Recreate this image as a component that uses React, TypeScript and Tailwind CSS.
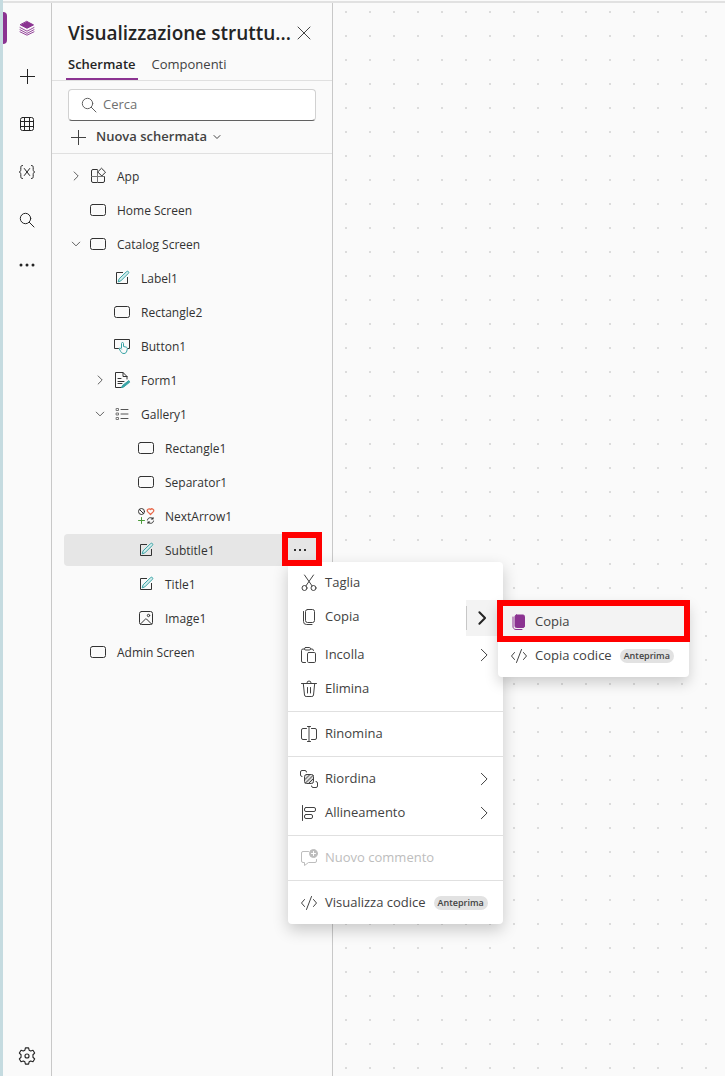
import React from 'react';
import clsx from 'clsx';

interface SvgProps {
   children: React.ReactNode;
   className?: string;
}

const Svg: React.FC<SvgProps> = ({ children, className = 'w-4 h-4' }) => (
   <svg
      className={clsx('flex-shrink-0 overflow-visible', className)}
      viewBox="0 0 16 16"
      fill="none"
      stroke="currentColor"
      strokeLinecap="round"
      strokeLinejoin="round"
      aria-hidden="true"
   >
      {children}
   </svg>
);

const ScreenIcon = () => (
   <Svg>
      <rect x="0.5" y="2.5" width="15" height="11" rx="2" />
   </Svg>
);

const AppIcon = () => (
   <Svg>
      <path d="M7.5 1.5H3A1.5 1.5 0 0 0 1.5 3v10A1.5 1.5 0 0 0 3 14.5h10a1.5 1.5 0 0 0 1.5-1.5V8.5" />
      <path d="M1.5 8.500h13M7.500 1.500v13" stroke="#777" />
      <path d="M11.800.5 15.500 4.200 11.800 8 8 4.200z" fill="#fafafa" />
   </Svg>
);

const LabelIcon = () => (
   <Svg>
      <path d="M9 2.500H2.500v11h11V7" strokeLinecap="butt" strokeLinejoin="miter" />
      <path
        d="M12.600 1.600a1.200 1.200 0 0 1 1.800 1.700l-7.600 7.600-2.600.9.800-2.600z"
        stroke="#38a3a5"
        fill="#d5eeee"
      />
   </Svg>
);

const ButtonIcon = () => (
   <Svg>
      <path d="M4.500 10.500h-4v-9h15v9h-2" />
      <path
        d="M7.500 10V5.500a1 1 0 0 1 2 0V8.500l2.500.6c1 .3 1.500.9 1.300 1.900l-.5 2c-.3 1.500-1.300 2.500-2.800 2.500-1.700 0-2.600-.7-3.300-2L5 10.500c.8-.6 1.800-.3 2.500.6"
        stroke="#38a3a5"
        fill="#fafafa"
      />
   </Svg>
);

const FormIcon = () => (
   <Svg>
      <path d="M8 15.500H1.500V.5H9l4 4V7M9 .5v4h4M4 6.500h3M4 9.500h6M4 11.500h4" />
      <path d="m14.500 8.800-6 4.700-1 2 2.200-.5 5.800-4.700z" stroke="#38a3a5" fill="#38a3a5" />
   </Svg>
);

const GalleryIcon = () => (
   <Svg>
      <path d="M2.500 2.500h2v2h-2zM2.500 7h2v2h-2zM2.500 11.500h2v2h-2z" stroke="#777" />
      <path d="M7 3.500h7M7 8h7M7 12.500h7" stroke="#555" />
   </Svg>
);

const IconsIcon = () => (
   <Svg>
      <circle cx="3.500" cy="3.500" r="3" />
      <path d="m1.500 1.500 4 4" />
      <path
        d="M12.500 6.500 9.600 3.600a1.700 1.700 0 0 1 2.900-2 1.700 1.700 0 0 1 2.900 2z"
        stroke="#e8684a"
        strokeWidth="1.200"
      />
      <path d="M3.500 9.500v6M.5 12.500h6" stroke="#4a9a3a" />
      <path d="M9.500 12c.3-1.500 1.300-2.300 3-2.300 1 0 1.800.4 2.500 1.300V9.500M15 11h-1.700M15.500 13c-.3 1.500-1.300 2.300-3 2.300-1 0-1.800-.4-2.500-1.300v1.500M10 14h1.700" />
   </Svg>
);

const ImageIcon = () => (
   <Svg>
      <rect x="1.500" y="1.500" width="13" height="13" rx="2" />
      <circle cx="10.500" cy="5.500" r="1.200" />
      <path d="m2.500 14 5-5q.5-.5 1 0l5 5" />
   </Svg>
);

const CutIcon = () => (
   <Svg>
      <circle cx="3.500" cy="13" r="2.500" />
      <circle cx="12.500" cy="13" r="2.500" />
      <path d="m3.500 0 7.600 10.900M12.500 0 4.900 10.900" />
   </Svg>
);

const CopyIcon = () => (
   <Svg>
      <rect x="4.500" y=".5" width="9" height="13" rx="2" />
      <path d="M2.500 2.500v10a3 3 0 0 0 3 3H11" />
   </Svg>
);

const CopyFilledIcon = () => (
   <Svg className="w-4 h-4 text-[#8b3391]">
      <rect x="4" y="1" width="9.500" height="12.500" rx="1.500" fill="currentColor" />
      <path d="M2 3v9a3 3 0 0 0 3 3.500H11" />
   </Svg>
);

const PasteIcon = () => (
   <Svg>
      <path d="M3.500 2H2A1.500 1.500 0 0 0 .5 3.500V14A1.500 1.500 0 0 0 2 15.500h2.500M9.500 2H11A1.500 1.500 0 0 1 12.500 3.500" />
      <rect x="3.500" y=".5" width="6" height="2.500" rx="1.200" />
      <rect x="6.500" y="5.500" width="8" height="10" rx="1.200" />
   </Svg>
);

const DeleteIcon = () => (
   <Svg>
      <path d="M.5 2.500h15M6 2.500V2a2 2 0 0 1 4 0v.5M2.300 2.500l1.200 11.500a1.700 1.700 0 0 0 1.700 1.500h5.600a1.700 1.700 0 0 0 1.700-1.500l1.200-11.500M6.500 6.500V12M9.500 6.500V12" />
   </Svg>
);

const RenameIcon = () => (
   <Svg>
      <path d="M5.500 2.500H2A1.500 1.500 0 0 0 .5 4v8A1.500 1.500 0 0 0 2 13.500h3.500M10.500 2.500H14A1.500 1.500 0 0 1 15.500 4v8a1.500 1.500 0 0 1-1.500 1.500h-3.500M8 .5v15M6.500.5h3M6.500 15.500h3" />
   </Svg>
);

const ReorderIcon = () => (
   <Svg>
      <path d="M1 5.500A1.500 1.500 0 0 1-.5 4V1A1.500 1.500 0 0 1 1-.5h3A1.500 1.500 0 0 1 5.500 1M10.500 15a1.500 1.500 0 0 0 1.500 1.500h3a1.500 1.500 0 0 0 1.500-1.500v-3a1.500 1.500 0 0 0-1.500-1.500" />
      <rect x="3.500" y="3.500" width="9" height="9" rx="2" fill="#ddd" />
      <path d="m4 8.500 4.500-4.500M4.500 12 12 4.500M7.500 12.500l5-5" />
   </Svg>
);

const AlignIcon = () => (
   <Svg>
      <path d="M1.500 .5v15" />
      <rect x="3.500" y="2.500" width="11" height="4" rx="1.500" />
      <rect x="3.500" y="9.500" width="8" height="4" rx="1.500" />
   </Svg>
);

const CommentIcon = () => (
   <Svg>
      <path d="M7.500 1.500H2A1.500 1.500 0 0 0 .5 3v8A1.500 1.500 0 0 0 2 12.500h1.500v3l4-3H14a1.500 1.500 0 0 0 1.500-1.500V9.500" />
      <circle cx="12.500" cy="3.500" r="4" fill="currentColor" />
      <path d="M12.500 1.500v4M10.500 3.500h4" stroke="#fff" />
   </Svg>
);

const CodeIcon = () => (
   <Svg>
      <path d="M3.500 4.500.5 8l3 3.500M12.500 4.500l3 3.500-3 3.500M10.500 1.500l-5 13" />
   </Svg>
);

const SearchIcon = ({ className }: { className?: string }) => (
   <Svg className={className}>
      <circle cx="6.500" cy="6.500" r="5.200" />
      <path d="m10.300 10.300 4.700 4.700" />
   </Svg>
);

const PlusIcon = () => (
   <Svg>
      <path d="M8.500 1v15M1 8.500h15" strokeLinecap="butt" />
   </Svg>
);

const MoreIcon = () => (
   <Svg>
      <g fill="currentColor" stroke="none">
         <circle cx="2" cy="8" r="1.500" />
         <circle cx="8" cy="8" r="1.500" />
         <circle cx="14" cy="8" r="1.500" />
      </g>
   </Svg>
);

const ChevronIcon = ({ down, className }: { down?: boolean; className?: string }) => (
   <Svg className={className}>
      <path
         d={down ? 'm2 5 6 6 6-6' : 'm5 1.500 6.500 6.500-6.500 6.500'}
         vectorEffect="non-scaling-stroke"
      />
   </Svg>
);

const LayersIcon = () => (
   <Svg className="w-4 h-4 text-[#8b3391]">
      <path d="m8 1.500 6.500 3.400L8 8.300 1.500 4.900z" fill="currentColor" />
      <path d="m1 7.500 7 3.700 7-3.700M1 9.700l7 3.700 7-3.700M1 11.800l7 3.400 7-3.400" strokeWidth=".9" />
   </Svg>
);

const GridIcon = () => (
   <Svg>
      <rect x="1.500" y="1.500" width="13" height="13" rx="2" />
      <path d="M5.500 1.500v13M10.500 1.500v13M1.500 5.500h13M1.500 10.500h13" />
   </Svg>
);

const VariableIcon = () => (
   <Svg>
      <path d="M3.500 1.500C2 1.500 1.800 2.300 1.800 3.500V5.500C1.800 7 1.300 7.700.3 8c1 .3 1.500 1 1.500 2.500v2c0 1.200.2 2 1.700 2M12.500 1.500c1.500 0 1.700.8 1.700 2V5.500c0 1.500.5 2.200 1.500 2.500-1 .3-1.500 1-1.500 2.500v2c0 1.200-.2 2-1.700 2" />
      <path d="m5.300 4.500 5.400 7M10.700 4.500l-5.400 7" />
   </Svg>
);

const SettingsIcon = () => (
   <Svg className="w-[18px] h-[18px]">
      <path d="M6.600.8h2.800l.5 2 1.400.8 2-.7 1.500 2.500-1.500 1.500v2.200l1.500 1.500-1.500 2.500-2-.7-1.400.8-.5 2H6.600l-.5-2-1.400-.8-2 .7-1.500-2.500 1.500-1.500V6.900L1.200 5.400l1.500-2.500 2 .7 1.400-.8z" />
      <circle cx="8" cy="8" r="1.800" />
   </Svg>
);

const railItems = [
   { label: 'Visualizzazione struttura ad albero', icon: <LayersIcon />, active: true },
   { label: 'Inserisci', icon: <PlusIcon /> },
   { label: 'Dati', icon: <GridIcon /> },
   { label: 'Variabili', icon: <VariableIcon /> },
   { label: 'Cerca', icon: <SearchIcon /> },
];

interface TreeNode {
   label: string;
   depth: number;
   icon: React.ReactNode;
   state?: 'open' | 'closed';
   selected?: boolean;
}

const nodes: TreeNode[] = [
   { label: 'App', depth: 0, icon: <AppIcon />, state: 'closed' },
   { label: 'Home Screen', depth: 0, icon: <ScreenIcon /> },
   { label: 'Catalog Screen', depth: 0, icon: <ScreenIcon />, state: 'open' },
   { label: 'Label1', depth: 1, icon: <LabelIcon /> },
   { label: 'Rectangle2', depth: 1, icon: <ScreenIcon /> },
   { label: 'Button1', depth: 1, icon: <ButtonIcon /> },
   { label: 'Form1', depth: 1, icon: <FormIcon />, state: 'closed' },
   { label: 'Gallery1', depth: 1, icon: <GalleryIcon />, state: 'open' },
   { label: 'Rectangle1', depth: 2, icon: <ScreenIcon /> },
   { label: 'Separator1', depth: 2, icon: <ScreenIcon /> },
   { label: 'NextArrow1', depth: 2, icon: <IconsIcon /> },
   { label: 'Subtitle1', depth: 2, icon: <LabelIcon />, selected: true },
   { label: 'Title1', depth: 2, icon: <LabelIcon /> },
   { label: 'Image1', depth: 2, icon: <ImageIcon /> },
   { label: 'Admin Screen', depth: 0, icon: <ScreenIcon /> },
];

const indents = ['pl-0', 'pl-6', 'pl-12'];

interface MenuItemProps {
   icon: React.ReactNode;
   label: string;
   badge?: string;
   arrow?: boolean;
   disabled?: boolean;
   active?: boolean;
}

const MenuItem: React.FC<MenuItemProps> = ({ icon, label, badge, arrow, disabled, active }) => (
   <button
      type="button"
      role="menuitem"
      disabled={disabled}
      className={clsx(
         'flex h-[34px] w-full items-center pl-[13px] pr-3 text-left text-[13px] whitespace-nowrap',
         disabled ? 'text-[#bdbdbd]' : 'text-[#424242]',
         active && 'bg-[#f3f3f3]'
      )}
   >
      {icon}
      <span className="ml-2">{label}</span>
      {badge && (
         <span className="ml-2 rounded-full bg-[#e2e2e2] px-1 text-[9px] leading-[14px] font-semibold">
            {badge}
         </span>
      )}
      {arrow && <ChevronIcon className="ml-auto h-3.5 w-3.5" />}
   </button>
);

const Divider = () => <div role="separator" className="my-[5px] h-px bg-[#e0e0e0]" />;

const CopySubmenu = () => (
   <div
      role="menu"
      aria-label="Copia"
      className="absolute top-px left-[210px] w-[191px] rounded bg-white py-1 shadow-[0_6px_14px_rgba(0,0,0,0.18)]"
   >
      <MenuItem icon={<CopyFilledIcon />} label="Copia" active />
      <MenuItem icon={<CodeIcon />} label="Copia codice" badge="Anteprima" />
      <div className="pointer-events-none absolute -inset-x-px -top-px h-[42px] border-[6px] border-[#ff0000]" />
   </div>
);

const ContextMenu = () => (
   <div
      role="menu"
      className="absolute top-7 left-1.5 z-10 w-[215px] rounded bg-white py-1 shadow-[0_6px_16px_rgba(0,0,0,0.2)]"
   >
      <MenuItem icon={<CutIcon />} label="Taglia" />
      <div className="relative flex h-[38px] items-start">
         <MenuItem icon={<CopyIcon />} label="Copia" />
         <button
            type="button"
            aria-label="Altre opzioni di copia"
            aria-expanded="true"
            className="flex h-9 w-[37px] flex-shrink-0 items-center bg-[#f3f3f3] text-[#242424]"
         >
            <span className="h-6 w-px bg-[#c7c7c7]" />
            <ChevronIcon className="ml-2 h-3.5 w-3.5 stroke-2" />
         </button>
         <CopySubmenu />
      </div>
      <MenuItem icon={<PasteIcon />} label="Incolla" arrow />
      <MenuItem icon={<DeleteIcon />} label="Elimina" />
      <Divider />
      <MenuItem icon={<RenameIcon />} label="Rinomina" />
      <Divider />
      <MenuItem icon={<ReorderIcon />} label="Riordina" arrow />
      <MenuItem icon={<AlignIcon />} label="Allineamento" arrow />
      <Divider />
      <MenuItem icon={<CommentIcon />} label="Nuovo commento" disabled />
      <Divider />
      <MenuItem icon={<CodeIcon />} label="Visualizza codice" badge="Anteprima" />
   </div>
);

const TreeItem: React.FC<{ node: TreeNode }> = ({ node }) => (
   <li
      role="treeitem"
      aria-selected={!!node.selected}
      className={clsx(
         'flex h-8 items-center rounded text-xs text-[#323232]',
         indents[node.depth],
         node.selected && 'bg-[#e6e6e6]'
      )}
   >
      <span className="mr-0.5 flex w-6 justify-center text-[#616161]">
         {node.state && (
            <button type="button" aria-label={node.state === 'open' ? 'Comprimi' : 'Espandi'}>
               <ChevronIcon down={node.state === 'open'} className="h-2.5 w-2.5" />
            </button>
         )}
      </span>
      {node.icon}
      <span className="ml-[11px] flex-1 pt-0.5">{node.label}</span>
      {node.selected && (
         <div className="relative -mr-0.5 h-8 w-10">
            <button
               type="button"
               aria-label="Altre azioni"
               className="flex h-8 w-9 items-center justify-center"
            >
               <span className="flex gap-[3px]">
                  <span className="h-0.5 w-0.5 bg-[#323232]" />
                  <span className="h-0.5 w-0.5 bg-[#323232]" />
                  <span className="h-0.5 w-0.5 bg-[#323232]" />
               </span>
            </button>
            <ContextMenu />
            <div className="pointer-events-none absolute inset-x-0 -top-0.5 bottom-0 z-20 border-[6px] border-[#ff0000]" />
         </div>
      )}
   </li>
);

const Rail = () => (
   <nav className="flex w-[49px] flex-shrink-0 flex-col border-r border-[#c8c8c8] pt-px text-[#242424]">
      {railItems.map((item) => (
         <button
            key={item.label}
            type="button"
            aria-label={item.label}
            className="flex h-12 w-full items-center"
         >
            <span className={clsx('h-8 w-1 rounded-r', item.active && 'bg-[#8b3391]')} />
            <span className="flex flex-1 justify-center pr-1">{item.icon}</span>
         </button>
      ))}
      <button type="button" aria-label="Altro" className="flex h-[42px] items-center justify-center">
         <MoreIcon />
      </button>
      <button
         type="button"
         aria-label="Impostazioni"
         className="mt-auto flex h-10 items-center justify-center"
      >
         <SettingsIcon />
      </button>
   </nav>
);

const TreePanel = () => (
   <aside className="flex w-[281px] flex-shrink-0 flex-col border-r border-[#c8c8c8]">
      <header className="border-b border-[#e0e0e0] pl-4 pr-5">
         <div className="flex h-12 items-center justify-between pt-3">
            <h1 className="text-[19px] leading-7 font-semibold whitespace-nowrap text-[#242424]">
               Visualizzazione struttu...
            </h1>
            <button type="button" aria-label="Chiudi" className="text-[#424242]">
               <Svg>
                  <path d="m2 2 12 12M14 2 2 14" />
               </Svg>
            </button>
         </div>
         <div role="tablist" className="-ml-0.5 flex h-[29px] gap-3.5 text-[13px]">
            <button
               type="button"
               role="tab"
               aria-selected="true"
               className="border-b-2 border-[#8b3391] px-0.5 font-semibold text-[#242424]"
            >
               Schermate
            </button>
            <button
               type="button"
               role="tab"
               aria-selected="false"
               className="border-b-2 border-transparent text-[#424242]"
            >
               Componenti
            </button>
         </div>
      </header>

      <div className="border-b border-[#e0e0e0] px-4 pt-2 pb-px">
         <label className="flex h-8 items-center rounded border border-[#d1d1d1] border-b-[#616161] bg-white px-3 text-[#616161]">
            <SearchIcon />
            <input
               type="text"
               aria-label="Cerca"
               placeholder="Cerca"
               className="ml-1.5 min-w-0 flex-1 bg-transparent text-[13px] outline-none placeholder:text-[#707070]"
            />
         </label>
         <button
            type="button"
            className="ml-0.5 flex h-[31px] items-center text-[13px] font-semibold text-[#424242]"
         >
            <PlusIcon />
            <span className="ml-2.5">Nuova schermata</span>
            <ChevronIcon down className="ml-1.5 h-2 w-2" />
         </button>
      </div>

      <ul role="tree" className="flex flex-col gap-0.5 pt-1.5 pr-3 pl-3">
         {nodes.map((node) => (
            <TreeItem key={node.label} node={node} />
         ))}
      </ul>
   </aside>
);

const App: React.FC = () => (
   <div className="flex min-h-screen bg-[#fafafa] font-['Open_Sans','Noto_Sans',sans-serif]">
      <div className="w-[3px] flex-shrink-0 bg-[#c5dbe0]" />
      <div className="flex min-w-0 flex-1 flex-col">
         <div className="mt-px h-0.5 bg-[#e1e1e1]" />
         <div className="flex flex-1">
            <Rail />
            <TreePanel />
            <main className="flex-1 bg-[conic-gradient(from_90deg_at_22px_22px,#dcdcdc_90deg,transparent_0)] bg-[length:24px_24px] bg-[position:-10px_-14px]" />
         </div>
      </div>
   </div>
);

export default App;
